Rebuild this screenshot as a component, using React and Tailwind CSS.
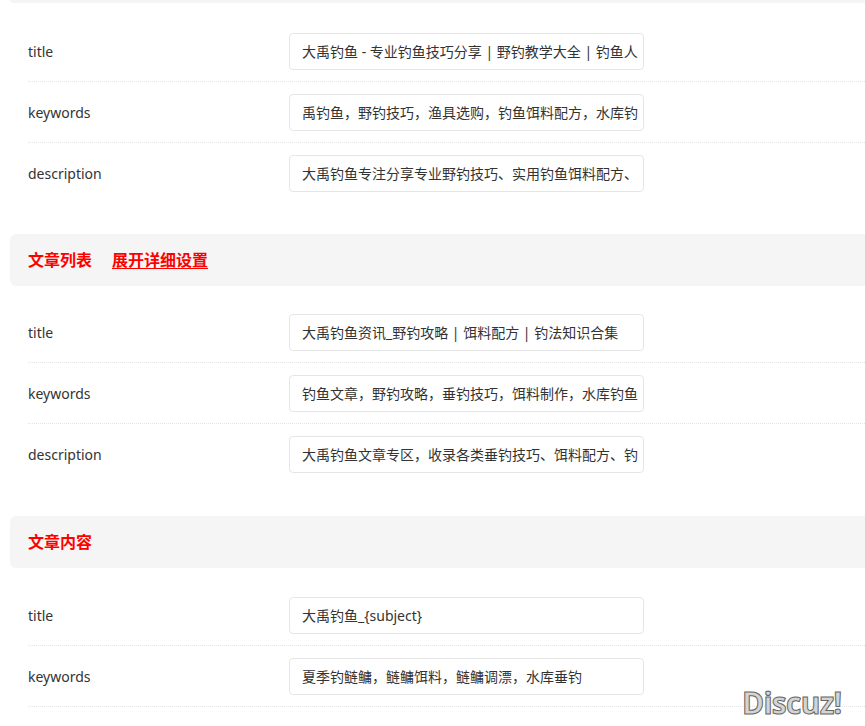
import React from 'react';

const Row = ({ label, value, last }) => (
  <div className={"flex items-center h-[61px] ml-[28px] " + (last ? "" : "border-b border-dotted border-[#e5e5e5]")}>
    <div className="w-[261px] text-[14px] text-[#333]">{label}</div>
    <div className="w-[355px] h-[37px] border border-[#e6e6e6] rounded-[4px] bg-white flex items-center px-[12px] overflow-hidden whitespace-nowrap text-[14px] text-[#333]">
      {value}
    </div>
  </div>
);

const Header = ({ title, link }) => (
  <div className="ml-[10px] h-[52px] bg-[#f5f5f5] rounded-l-[6px] flex items-center pl-[18px] gap-[20px] text-[16px] font-bold text-[#ff0000]">
    <span>{title}</span>
    {link && <span className="underline underline-offset-2">{link}</span>}
  </div>
);

export default function App() {
  return (
    <div className="relative w-[865px] h-[726px] overflow-hidden bg-white" style={{ fontFamily: '"Noto Sans", "Noto Sans CJK SC", sans-serif' }}>
      <div className="ml-[10px] h-[3px] bg-[#f5f5f5] rounded-bl-[6px]" />
      <div className="pt-[18px] pb-[30px]">
        <Row label="title" value="大禹钓鱼 - 专业钓鱼技巧分享 | 野钓教学大全 | 钓鱼人" />
        <Row label="keywords" value="禹钓鱼，野钓技巧，渔具选购，钓鱼饵料配方，水库钓" />
        <Row label="description" value="大禹钓鱼专注分享专业野钓技巧、实用钓鱼饵料配方、" last />
      </div>
      <Header title="文章列表" link="展开详细设置" />
      <div className="pt-[16px] pb-[31px]">
        <Row label="title" value="大禹钓鱼资讯_野钓攻略 | 饵料配方 | 钓法知识合集" />
        <Row label="keywords" value="钓鱼文章，野钓攻略，垂钓技巧，饵料制作，水库钓鱼" />
        <Row label="description" value="大禹钓鱼文章专区，收录各类垂钓技巧、饵料配方、钓" last />
      </div>
      <Header title="文章内容" />
      <div className="pt-[17px]">
        <Row label="title" value="大禹钓鱼_{subject}" />
        <Row label="keywords" value="夏季钓鲢鳙，鲢鳙饵料，鲢鳙调漂，水库垂钓" />
      </div>
      <div className="absolute left-[742px] top-[680px] text-[30px] font-bold text-[#d4d4d4] tracking-tight [-webkit-text-stroke:1px_#666]" style={{ fontFamily: '"Open Sans", sans-serif' }}>
        Discuz!
      </div>
    </div>
  );
}
